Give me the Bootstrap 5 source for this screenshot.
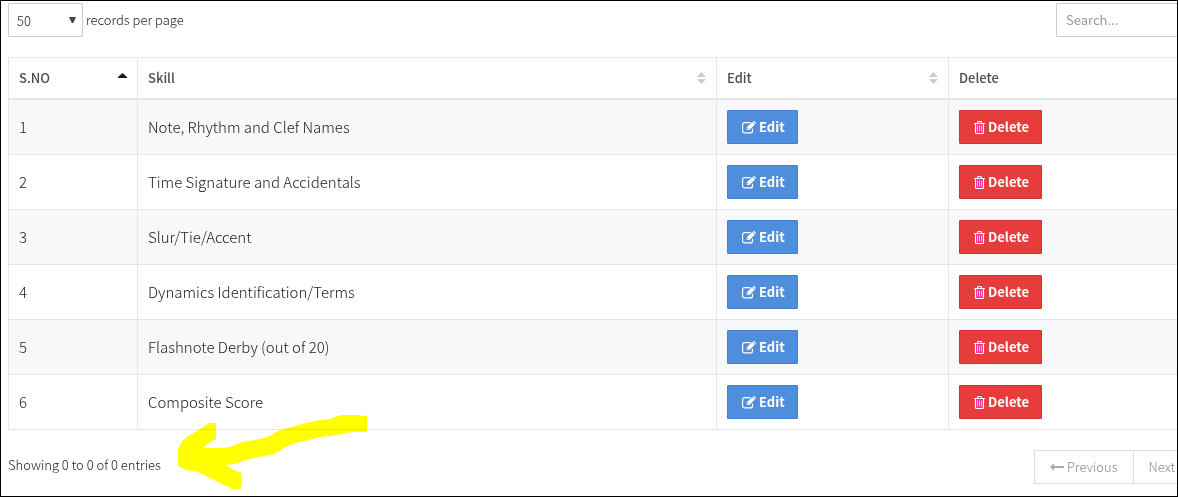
<!DOCTYPE html>
<html lang="en">
<head>
<meta charset="utf-8">
<meta name="viewport" content="width=device-width, initial-scale=1">
<title>Skills</title>
<link rel="stylesheet" href="https://cdn.jsdelivr.net/npm/bootstrap@5.3.0/dist/css/bootstrap.min.css">
<style>
  body { font-family: "Noto Sans CJK SC", "Open Sans", sans-serif; font-size: 13px; font-weight: 300; line-height: 20px; color: #222; background: #fff; }
  .frame { min-height: 100vh; border: 1px solid #000; overflow: hidden; padding: 2px 0 12px 7px; }
  /* the panel runs past the right edge of the frame */
  .panel { margin-right: -33px; }
  .length-select { width: 75px; height: 34px; font-size: 13px; font-weight: 300; line-height: 20px; color: #222; padding: 7px 20px 5px 8px; border: 1px solid #cbccd0; border-radius: 1px;
    background-image: url("data:image/svg+xml,%3Csvg xmlns='http://www.w3.org/2000/svg' viewBox='0 0 7 6'%3E%3Cpath d='M0 0h7L4.200 6H2.800z' fill='%23444'/%3E%3C/svg%3E"); background-size: 7px 6px; background-position: right 6px top 13px; }
  .length-label { margin-left: 3px; }
  .search-input { width: 154px; height: 34px; font-size: 13px; line-height: 20px; padding: 5px 9px 7px; border: 1px solid #cbccd0; border-radius: 1px; }
  .search-input::placeholder { color: #999; }
  .skills { --bs-table-color: #222; --bs-table-striped-color: #222; --bs-table-striped-bg: #f7f8fa; table-layout: fixed; margin: 20px 0; border-color: #e5e6e8; font-size: 15px; }
  .skills > :not(caption) > * > * { padding: 10px; }
  .skills > thead > tr > th { font-size: 13px; font-weight: 500; line-height: 20px; border-bottom-width: 2px; color: #4d4d4d; }
  .skills > tbody > tr > td { vertical-align: middle; }
  .col-no { width: 129px; }
  .col-edit { width: 232px; }
  .col-delete { width: 261px; }
  .action { display: inline-flex; align-items: center; gap: 3px; height: 34px; padding: 6px 12px 6px 14px; font-size: 13px; font-weight: 600; line-height: 20px; border-radius: 1px; color: #fff; vertical-align: top; }
  .action:hover { color: #fff; filter: brightness(.95); }
  .btn-edit, .btn-edit:hover { background: #4f8edc; border-color: #4480cc; }
  .btn-remove, .btn-remove:hover { background: #e73c3c; border-color: #d23232; }
  .pager { --bs-pagination-border-radius: 0; margin: 0; }
  .pager .page-link { display: flex; align-items: center; gap: 3px; height: 34px; padding: 6px 15px; font-size: 13px; line-height: 20px; color: #888; background: #fff; border-color: #ddd; }
  .pager .page-item:last-child .page-link { padding-right: 17px; }
  .info { padding-top: 5px; }
  .marker { position: absolute; left: 170px; top: 405px; pointer-events: none; mix-blend-mode: multiply; }
</style>
</head>
<body>
<svg class="d-none" aria-hidden="true">
  <symbol id="i-edit" viewBox="0 0 14 13">
    <path d="M10.500 7.800v2.100a2 2 0 0 1-2 2H2.600a2 2 0 0 1-2-2V3.600a2 2 0 0 1 2-2h5.800" fill="none" stroke="#fff" stroke-width="1.200"/>
    <path d="M4.800 6.300 10.200.900l2.700 2.700L7.500 9H4.800zM10.900.6l.5-.4q.5-.4 1 0l1.300 1.300q.4.500 0 1l-.5.500z" fill="#fff"/>
    <path d="M5.900 6.800v1.100h1" fill="none" stroke="#4f8edc" stroke-width=".6"/>
  </symbol>
  <symbol id="i-trash" viewBox="0 0 11 13">
    <path d="M2 3.500h7v8H2z" fill="#f0309c"/>
    <path d="M0 2.500h11M3.500 2.500v-1q0-1 1-1h2q1 0 1 1v1M1.500 3v8.500q0 1 1 1h6q1 0 1-1V3" fill="none" stroke="#fff" stroke-width="1.100"/>
    <path d="M3.500 4.500v6M5.500 4.500v6M7.500 4.500v6" stroke="#ffb4ec" stroke-width="1"/>
  </symbol>
  <symbol id="i-left" viewBox="0 0 14 8"><path d="M0 4 3.500.8q.6-.3.600.3V3H13.500q.5 0 .5.500v1q0 .5-.5.500H4.100v1.900q0 .6-.6.300z" fill="#aaa"/></symbol>
  <symbol id="i-right" viewBox="0 0 14 8"><path d="M14 4 10.500.8q-.6-.3-.6.300V3H.5q-.5 0-.5.500v1q0 .5.500.5h9.400v1.900q0 .6.600.3z" fill="#aaa"/></symbol>
  <symbol id="i-sort" viewBox="0 0 9 12"><path d="M4.500 0 9 5H0zM0 7h9l-4.500 5z" fill="#ccc"/></symbol>
  <symbol id="i-asc" viewBox="0 0 9 12"><path d="M4.500 1 9 5v1H0V5z" fill="#1a1a1a"/></symbol>
</svg>

<main class="frame position-relative">
  <div class="panel">
    <div class="d-flex justify-content-between align-items-center">
      <div class="d-flex align-items-center">
        <select class="form-select length-select" id="length"><option>10</option><option>25</option><option selected>50</option></select>
        <label class="length-label" for="length">records per page</label>
      </div>
      <input class="form-control search-input" type="search" placeholder="Search..." aria-label="Search">
    </div>

    <table class="table table-bordered table-striped skills">
      <colgroup><col class="col-no"><col><col class="col-edit"><col class="col-delete"></colgroup>
      <thead>
        <tr>
          <th scope="col"><div class="d-flex justify-content-between align-items-center">S.NO <svg width="9" height="12"><use href="#i-asc"/></svg></div></th>
          <th scope="col"><div class="d-flex justify-content-between align-items-center">Skill <svg width="9" height="12"><use href="#i-sort"/></svg></div></th>
          <th scope="col"><div class="d-flex justify-content-between align-items-center">Edit <svg width="9" height="12"><use href="#i-sort"/></svg></div></th>
          <th scope="col"><div class="d-flex justify-content-between align-items-center">Delete <svg width="9" height="12"><use href="#i-sort"/></svg></div></th>
        </tr>
      </thead>
      <tbody>
        <tr><td>1</td><td>Note, Rhythm and Clef Names</td><td><button class="btn action btn-edit" type="button"><svg width="14" height="13"><use href="#i-edit"/></svg>Edit</button></td><td><button class="btn action btn-remove" type="button"><svg width="11" height="13"><use href="#i-trash"/></svg>Delete</button></td></tr>
        <tr><td>2</td><td>Time Signature and Accidentals</td><td><button class="btn action btn-edit" type="button"><svg width="14" height="13"><use href="#i-edit"/></svg>Edit</button></td><td><button class="btn action btn-remove" type="button"><svg width="11" height="13"><use href="#i-trash"/></svg>Delete</button></td></tr>
        <tr><td>3</td><td>Slur/Tie/Accent</td><td><button class="btn action btn-edit" type="button"><svg width="14" height="13"><use href="#i-edit"/></svg>Edit</button></td><td><button class="btn action btn-remove" type="button"><svg width="11" height="13"><use href="#i-trash"/></svg>Delete</button></td></tr>
        <tr><td>4</td><td>Dynamics Identification/Terms</td><td><button class="btn action btn-edit" type="button"><svg width="14" height="13"><use href="#i-edit"/></svg>Edit</button></td><td><button class="btn action btn-remove" type="button"><svg width="11" height="13"><use href="#i-trash"/></svg>Delete</button></td></tr>
        <tr><td>5</td><td>Flashnote Derby (out of 20)</td><td><button class="btn action btn-edit" type="button"><svg width="14" height="13"><use href="#i-edit"/></svg>Edit</button></td><td><button class="btn action btn-remove" type="button"><svg width="11" height="13"><use href="#i-trash"/></svg>Delete</button></td></tr>
        <tr><td>6</td><td>Composite Score</td><td><button class="btn action btn-edit" type="button"><svg width="14" height="13"><use href="#i-edit"/></svg>Edit</button></td><td><button class="btn action btn-remove" type="button"><svg width="11" height="13"><use href="#i-trash"/></svg>Delete</button></td></tr>
      </tbody>
    </table>

    <div class="d-flex justify-content-between">
      <div class="info">Showing 0 to 0 of 0 entries</div>
      <nav aria-label="Table pages">
        <ul class="pagination pager">
          <li class="page-item"><a class="page-link" href="#"><svg width="14" height="8"><use href="#i-left"/></svg>Previous</a></li>
          <li class="page-item"><a class="page-link" href="#">Next<svg width="14" height="8"><use href="#i-right"/></svg></a></li>
        </ul>
      </nav>
    </div>
  </div>

  <!-- highlighter arrow -->
  <svg class="marker" width="205" height="92" viewBox="1 1 205 92" aria-hidden="true">
    <path d="M8 44 13 35 20 30 30 24 39 18H46V34L42 36 32 43H50L60 42 72 37 85 35 98 32 108 26 121 22 136 18 150 15 160 14 171 10H190L191 11H197V27H182L161 31 150 32 138 35 125 38 114 43 104 49 90 52 79 54 65 59 55 60 62 64 71 68V84H62L46 76 28 67 16 65 8 61Z" fill="#ff0"/>
  </svg>
</main>
<script src="https://cdn.jsdelivr.net/npm/bootstrap@5.3.0/dist/js/bootstrap.bundle.min.js"></script>
</body>
</html>
